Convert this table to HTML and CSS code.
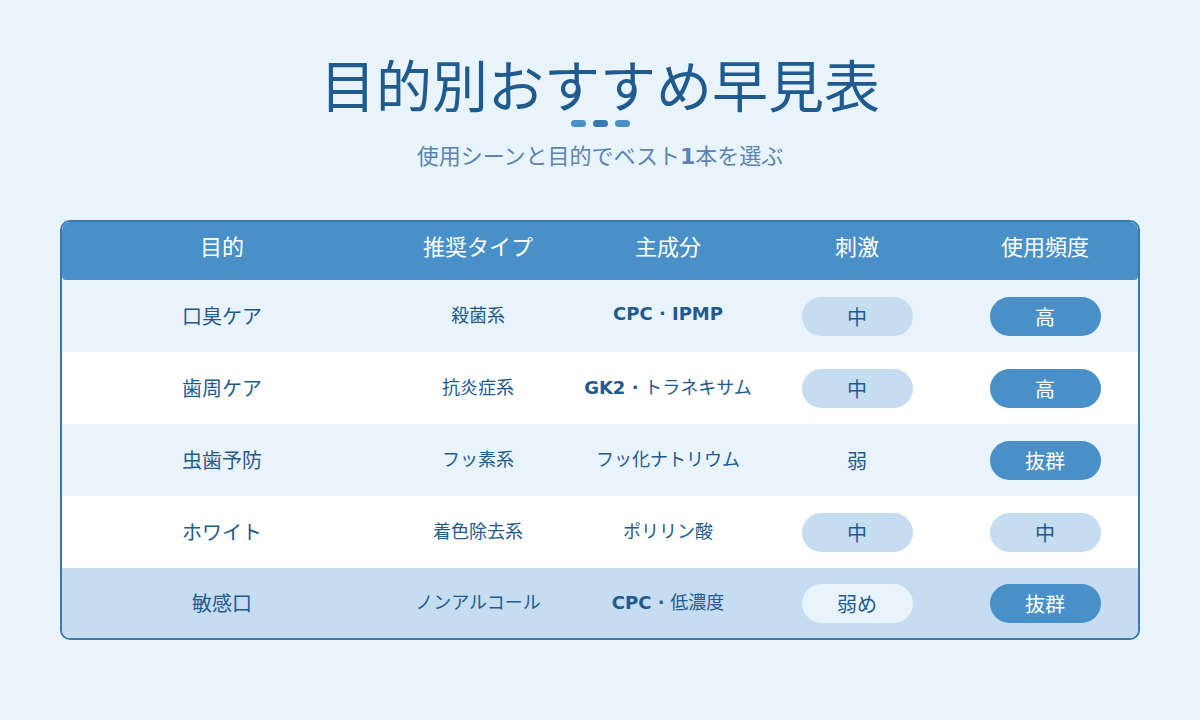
FILE: index.html
```html
<!DOCTYPE html>
<html lang="ja">
<head>
<meta charset="utf-8">
<title>目的別おすすめ早見表</title>
<link rel="stylesheet" href="styles.css">
</head>
<body>
<main class="page">
  <header class="intro">
    <h1 class="title">目的別おすすめ早見表</h1>
    <div class="dots"><span class="dot"></span><span class="dot dark"></span><span class="dot"></span></div>
    <p class="subtitle">使用シーンと目的でベスト<b>1</b>本を選ぶ</p>
  </header>

  <section class="table">
    <div class="row head">
      <div class="cell">目的</div>
      <div class="cell">推奨タイプ</div>
      <div class="cell">主成分</div>
      <div class="cell">刺激</div>
      <div class="cell">使用頻度</div>
    </div>

    <div class="row alt">
      <div class="cell purpose">口臭ケア</div>
      <div class="cell small">殺菌系</div>
      <div class="cell small"><b>CPC · IPMP</b></div>
      <div class="cell"><span class="pill light">中</span></div>
      <div class="cell"><span class="pill dark">高</span></div>
    </div>

    <div class="row plain">
      <div class="cell purpose">歯周ケア</div>
      <div class="cell small">抗炎症系</div>
      <div class="cell small"><span><b>GK2 ·</b> トラネキサム</span></div>
      <div class="cell"><span class="pill light">中</span></div>
      <div class="cell"><span class="pill dark">高</span></div>
    </div>

    <div class="row alt">
      <div class="cell purpose">虫歯予防</div>
      <div class="cell small">フッ素系</div>
      <div class="cell small">フッ化ナトリウム</div>
      <div class="cell"><span class="pill none">弱</span></div>
      <div class="cell"><span class="pill dark">抜群</span></div>
    </div>

    <div class="row plain">
      <div class="cell purpose">ホワイト</div>
      <div class="cell small">着色除去系</div>
      <div class="cell small">ポリリン酸</div>
      <div class="cell"><span class="pill light">中</span></div>
      <div class="cell"><span class="pill light">中</span></div>
    </div>

    <div class="row highlight">
      <div class="cell purpose">敏感口</div>
      <div class="cell small">ノンアルコール</div>
      <div class="cell small"><span><b>CPC ·</b> 低濃度</span></div>
      <div class="cell"><span class="pill pale">弱め</span></div>
      <div class="cell"><span class="pill dark">抜群</span></div>
    </div>
  </section>
</main>
</body>
</html>
```

FILE: styles.css
```css
* { box-sizing: border-box; }

html, body {
  margin: 0;
  padding: 0;
  background: #e8f3fb;
}

body {
  font-family: "DejaVu Sans", "Noto Sans CJK JP", sans-serif;
  color: #1f5b8e;
  width: 1200px;
  height: 720px;
  overflow: hidden;
}

.page {
  padding: 54px 60px 0;
}

.intro {
  display: flex;
  flex-direction: column;
  align-items: center;
}

.title {
  margin: 0;
  font-size: 56px;
  line-height: 67px;
  font-weight: 400;
  color: #1f5b8e;
  letter-spacing: 0;
}

.dots {
  display: flex;
  gap: 7px;
  margin-top: -1px;
  position: relative;
}

.dot {
  width: 15px;
  height: 7px;
  border-radius: 4px;
  background: #4a90c8;
}

.dot.dark { background: #3a78b0; }

.subtitle {
  margin: 15px 0 0;
  font-size: 22px;
  line-height: 29px;
  color: #5a85b0;
  font-weight: 400;
}

.subtitle b { font-weight: 700; }

.table {
  margin-top: 49px;
  width: 1080px;
  border: 2px solid #3a78b0;
  border-radius: 10px;
  overflow: hidden;
  background: #e8f3fb;
}

.row {
  display: grid;
  grid-template-columns: 320px 192px 188px 190px 186px;
  height: 72px;
}

.row.head {
  height: 58px;
  background: #4a90c8;
  color: #ffffff;
  border-radius: 8px 8px 4px 4px;
}

.row.alt { background: #e8f3fb; }
.row.plain { background: #ffffff; }
.row.highlight { background: #c6dcf0; height: 70px; }

.cell {
  display: flex;
  align-items: center;
  justify-content: center;
  font-size: 18px;
  font-weight: 400;
  white-space: nowrap;
}

.head .cell {
  font-size: 22px;
  font-weight: 400;
  padding-bottom: 12px;
}

.cell.purpose {
  font-size: 20px;
  padding-bottom: 1px;
}

.cell.small {
  font-size: 18px;
  padding-bottom: 5px;
}

.cell b { font-weight: 700; }

.pill {
  display: flex;
  align-items: center;
  justify-content: center;
  width: 111px;
  height: 39px;
  border-radius: 20px;
  font-size: 20px;
  font-weight: 400;
}

.pill.light { background: #c6dcf0; color: #1f5b8e; }
.pill.dark { background: #4a90c8; color: #ffffff; }
.pill.pale { background: #e8f3fb; color: #1f5b8e; }
.pill.none { background: transparent; color: #1f5b8e; }
```
